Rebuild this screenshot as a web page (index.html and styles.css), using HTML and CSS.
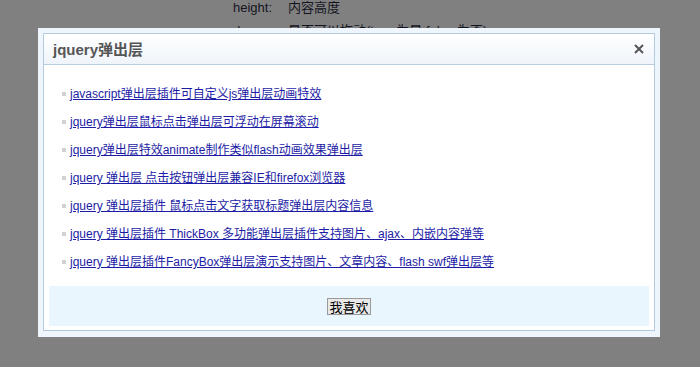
FILE: index.html
```html
<!DOCTYPE html>
<html>
<head>
<meta charset="utf-8">
<link rel="stylesheet" href="styles.css">
</head>
<body>
<div class="page">
  <div class="prop"><span class="key">height:</span><span class="val">内容高度</span></div>
  <div class="prop"><span class="key">drag:</span><span class="val">是否可以拖动(true 为是 false 为否)</span></div>
</div>
<div class="dialog">
  <div class="frame">
    <div class="titlebar">
      <span class="title">jquery弹出层</span>
      <span class="close"><svg width="10" height="10" viewBox="0 0 10 10"><path d="M1 1L9 9M9 1L1 9" stroke="#555" stroke-width="2" fill="none"/></svg></span>
    </div>
    <ul class="links">
      <li><a href="#">javascript弹出层插件可自定义js弹出层动画特效</a></li>
      <li><a href="#">jquery弹出层鼠标点击弹出层可浮动在屏幕滚动</a></li>
      <li><a href="#">jquery弹出层特效animate制作类似flash动画效果弹出层</a></li>
      <li><a href="#">jquery 弹出层 点击按钮弹出层兼容IE和firefox浏览器</a></li>
      <li><a href="#">jquery 弹出层插件 鼠标点击文字获取标题弹出层内容信息</a></li>
      <li><a href="#">jquery 弹出层插件 ThickBox 多功能弹出层插件支持图片、ajax、内嵌内容弹等</a></li>
      <li><a href="#">jquery 弹出层插件FancyBox弹出层演示支持图片、文章内容、flash swf弹出层等</a></li>
    </ul>
    <div class="footer">
      <button class="btn" type="button">我喜欢</button>
    </div>
  </div>
</div>
</body>
</html>
```
FILE: styles.css
```css
html, body {
  margin: 0;
  padding: 0;
}
body {
  background: #808080;
  width: 700px;
  height: 367px;
  overflow: hidden;
  position: relative;
  font-family: "Liberation Sans", "Noto Sans CJK SC", sans-serif;
}
.page {
  display: flex;
  flex-direction: column;
  gap: 7px;
  padding-left: 233px;
  font-size: 13px;
  line-height: 16px;
  color: #15151f;
}
.prop {
  display: grid;
  grid-template-columns: 55px auto;
}
.dialog {
  position: absolute;
  left: 38px;
  top: 28px;
  width: 622px;
  box-sizing: border-box;
  padding: 5px 5px 6px;
  background: #eef5fc;
}
.frame {
  border: 1px solid #b3cadc;
  background: #fff;
  padding: 0 5px 4px 5px;
}
.titlebar {
  margin: 0 -5px;
  height: 30px;
  border-bottom: 1px solid #b8cee0;
  background: linear-gradient(#ffffff, #eff4fb);
  display: flex;
  align-items: center;
  justify-content: space-between;
  padding: 0 10px 0 9px;
}
.title {
  font-size: 15px;
  font-weight: bold;
  color: #555;
  line-height: 18px;
  padding-top: 1px;
}
.close {
  display: flex;
  width: 10px;
  height: 10px;
  margin-top: -1px;
}
.links {
  list-style: none;
  margin: 15px 0 10px;
  padding: 0 0 0 13px;
  font-size: 12px;
  line-height: 28px;
}
.links li {
  display: flex;
  align-items: center;
  gap: 4px;
}
.links li::before {
  content: "";
  width: 4px;
  height: 4px;
  background: #cfd3d8;
  flex: none;
}
.links a {
  color: #1c1ca6;
  text-decoration: underline;
}
.footer {
  height: 40px;
  background: #eaf6fd;
  display: flex;
  align-items: center;
  justify-content: center;
}
.btn {
  font-family: "Noto Sans CJK SC", sans-serif;
  font-size: 13px;
  line-height: 15px;
  height: 17px;
  padding: 0 1px;
  margin: 0;
  border: 1px solid #9a9a9a;
  background: #e9e9e9;
  color: #000;
  border-radius: 0;
  margin-top: 1px;
}
```
